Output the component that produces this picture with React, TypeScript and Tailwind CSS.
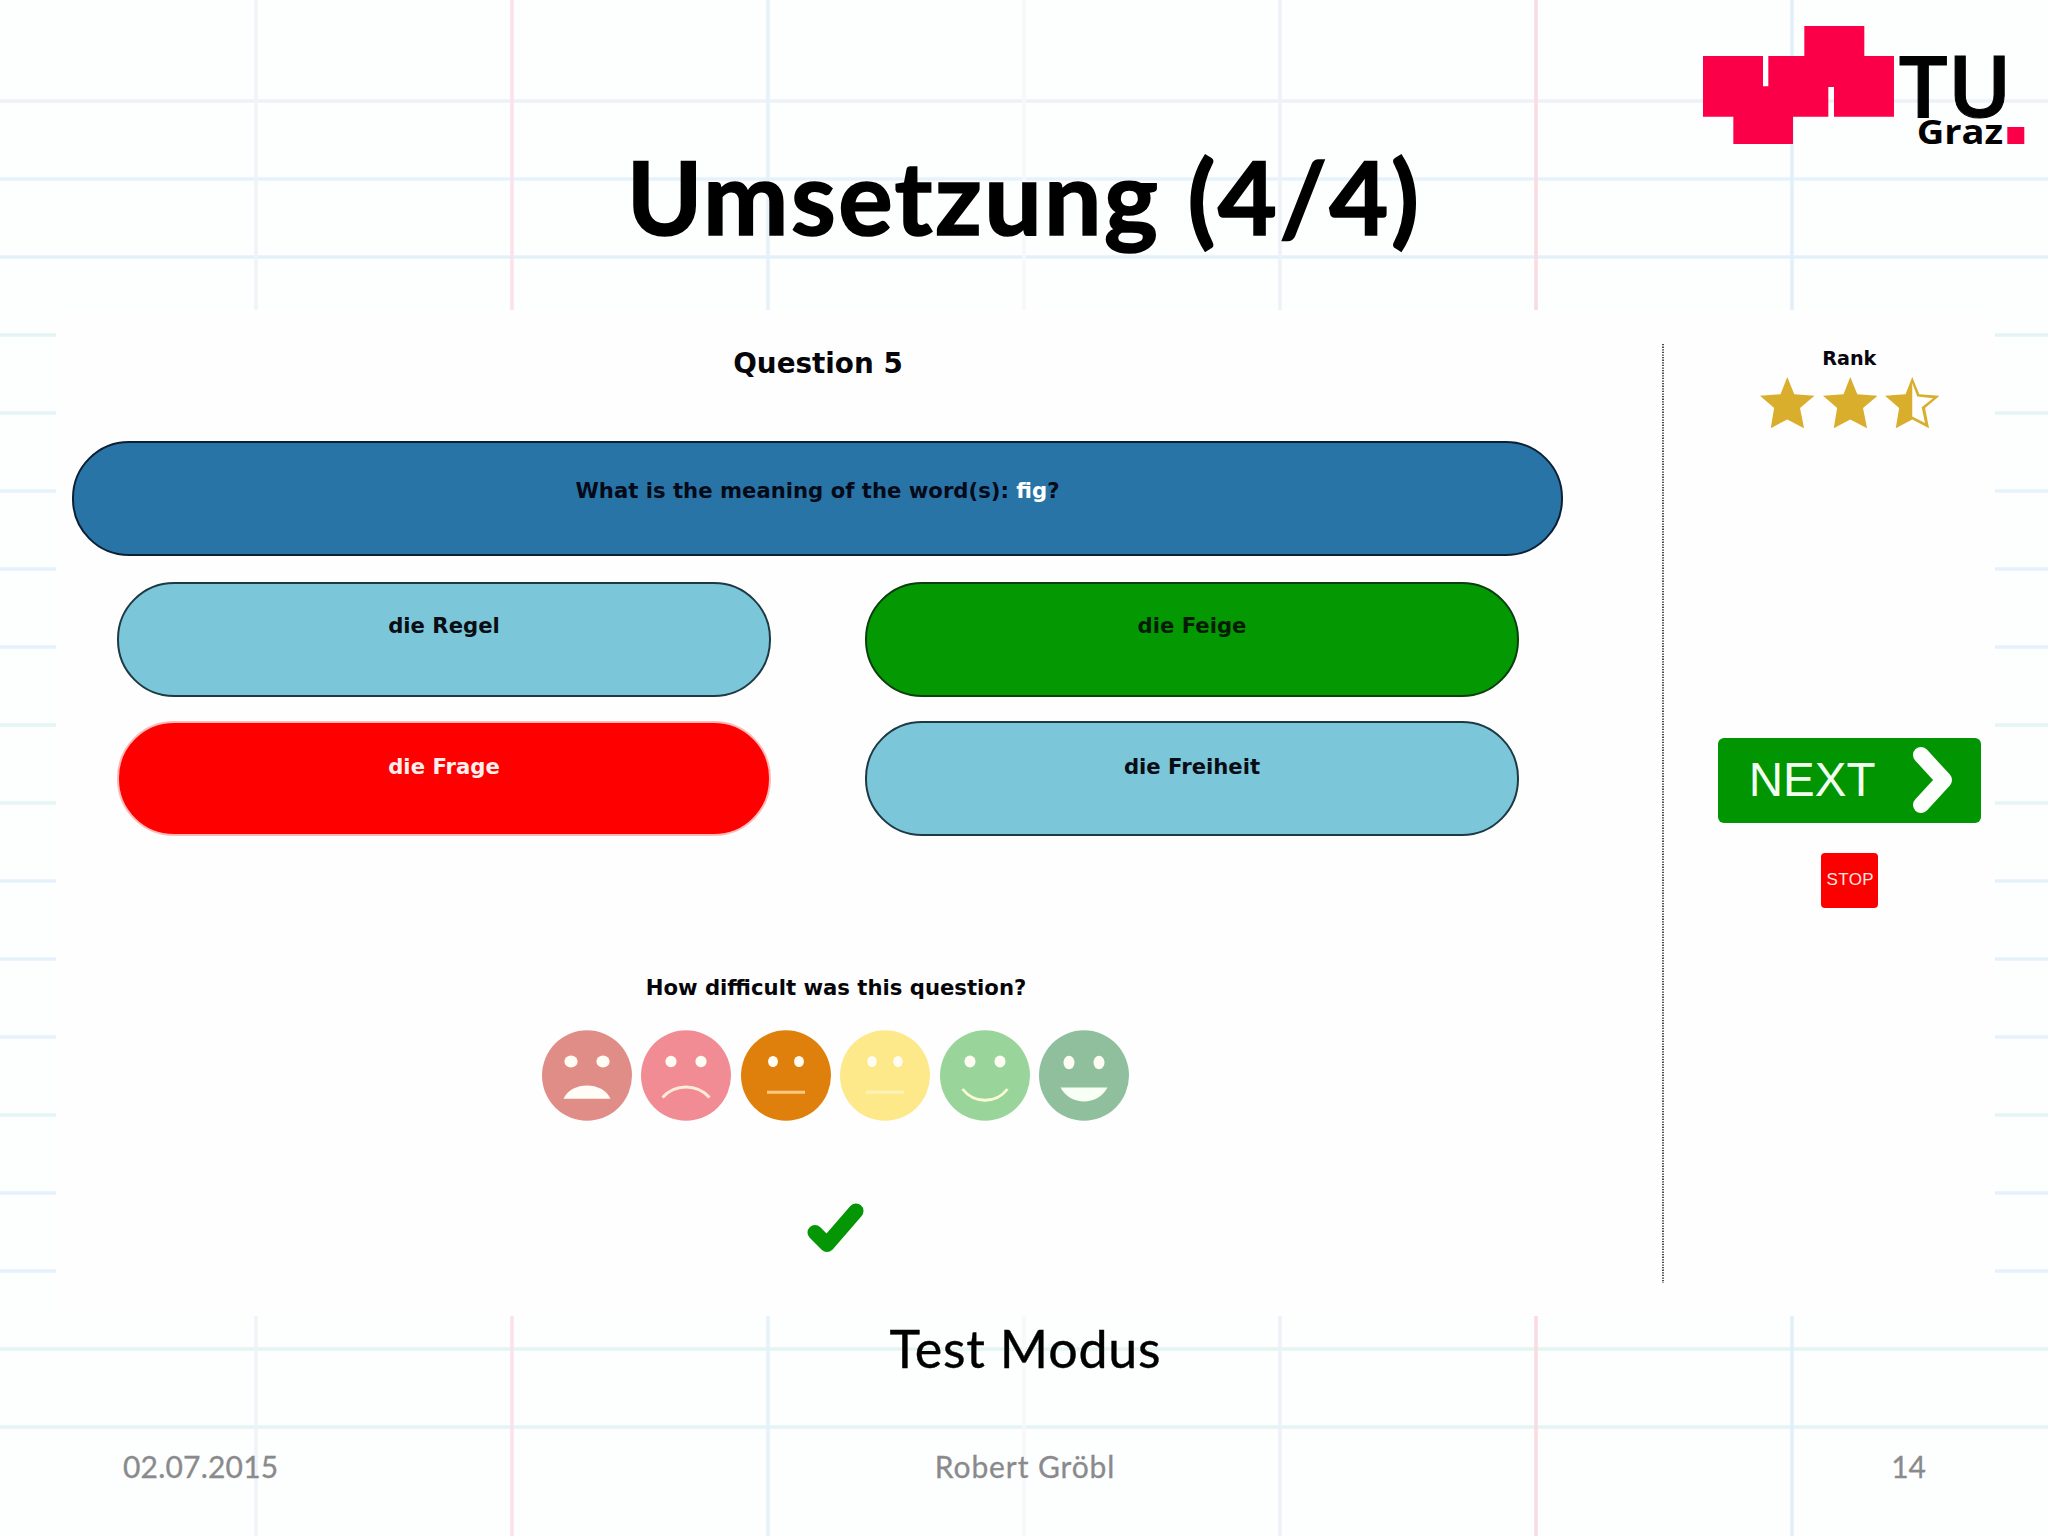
import type { ReactNode } from 'react';

type Status = 'idle' | 'correct' | 'wrong';

interface Answer {
  label: string;
  status: Status;
}

const ANSWER_ROWS: Answer[][] = [
  [
    { label: 'die Regel', status: 'idle' },
    { label: 'die Feige', status: 'correct' },
  ],
  [
    { label: 'die Frage', status: 'wrong' },
    { label: 'die Freiheit', status: 'idle' },
  ],
];

const STATUS_STYLES: Record<Status, string> = {
  idle: 'bg-[#7bc6d8] border-[#1d3a44] text-[#0a0d14]',
  correct: 'bg-[#049802] border-[#0b3f10] text-[#041c04]',
  wrong: 'bg-[#ff0000] border-[#ffb9b9] text-[#fff0ee]',
};

const H_LINES = [
  { y: 101, color: '#edf1f8' },
  { y: 179, color: '#e6f3fb' },
  { y: 257, color: '#e4f1fa' },
  { y: 335, color: '#e4f3f4' },
  { y: 413, color: '#e6f4f8' },
  { y: 491, color: '#e6f4fa' },
  { y: 569, color: '#e6f2fb' },
  { y: 647, color: '#e6f2fb' },
  { y: 725, color: '#e5f5f5' },
  { y: 803, color: '#e5f6f5' },
  { y: 881, color: '#e6f0fb' },
  { y: 959, color: '#e6f0fb' },
  { y: 1037, color: '#e6f1fb' },
  { y: 1115, color: '#e5f4f6' },
  { y: 1193, color: '#e6f1fb' },
  { y: 1271, color: '#e6f1fb' },
  { y: 1349, color: '#e4f4f3' },
  { y: 1427, color: '#e4f4f3' },
];

const V_LINES = [
  { x: 256, color: '#f0f3f8' },
  { x: 512, color: '#fbe2ea' },
  { x: 768, color: '#e6f1fb' },
  { x: 1024, color: '#f8f8fb' },
  { x: 1280, color: '#eef1f8' },
  { x: 1536, color: '#fbdbe2' },
  { x: 1792, color: '#e2effa' },
];

function PaperLines() {
  return (
    <svg className="absolute inset-0 -z-10" width="2048" height="1536" viewBox="0 0 2048 1536">
      {H_LINES.map(({ y, color }) => (
        <line key={y} x1="0" x2="2048" y1={y} y2={y} stroke={color} strokeWidth="3.6" />
      ))}
      {V_LINES.map(({ x, color }) => (
        <line key={x} x1={x} x2={x} y1="0" y2="1536" stroke={color} strokeWidth="3.6" />
      ))}
    </svg>
  );
}

function Logo() {
  return (
    <svg className="mt-[26px] mr-6 self-end overflow-visible" width="321.3" height="118" viewBox="68 78 964 354">
      <path
        d="M68 168H248V259H264V168H372V78H552V168H641V350H461V261H444V350H338V432H159V350H68Z"
        fill="#fb0049"
      />
      <g fontFamily="Open Sans, sans-serif" fill="#020202">
        <text
          transform="translate(655 350) scale(1.02 1)"
          fontSize="255"
          fontWeight="600"
          stroke="#020202"
          strokeWidth="3"
        >
          TU
        </text>
        <text transform="translate(709 433) scale(1.1 1)" fontSize="104" fontWeight="700">Graz</text>
      </g>
      <rect x="981" y="381" width="51" height="51" fill="#fb0049" />
    </svg>
  );
}

const STAR = 'M81 0L102 51L162 56L119 92L131 152L81 126L32 152L42 92L0 56L61 51Z';

function Star({ half = false }: { half?: boolean }) {
  return (
    <svg width="54.5" height="51.5" viewBox="0 0 162 153">
      {half ? (
        <path
          fillRule="evenodd"
          d={`${STAR}M81 18V117L119 137L109 90L143 63L96 58Z`}
          fill="#d9ae2d"
        />
      ) : (
        <path d={STAR} fill="#d9ae2d" />
      )}
    </svg>
  );
}

interface FaceProps {
  color: string;
  eyeX: number;
  eyeY?: number;
  rx: number;
  ry: number;
  children: ReactNode;
}

function Face({ color, eyeX, eyeY = -14, rx, ry, children }: FaceProps) {
  return (
    <svg width="90" height="91" viewBox="-45 -45.5 90 91">
      <ellipse rx="45" ry="45.3" fill={color} />
      <ellipse cx={-eyeX} cy={eyeY} rx={rx} ry={ry} fill="#fffdf3" />
      <ellipse cx={eyeX} cy={eyeY} rx={rx} ry={ry} fill="#fffdf3" />
      {children}
    </svg>
  );
}

function DifficultyPicker() {
  return (
    <div className="mt-[31.5px] mr-px flex gap-[9.6px]">
      <Face color="#e08d88" eyeX={16} rx={6.6} ry={6}>
        <path d="M-23.5 23.3C-16 5.5 16 5.5 23.5 23.3Z" fill="#fffdf5" />
      </Face>
      <Face color="#f18c94" eyeX={15} rx={5.6} ry={5.8}>
        <path d="M-23.5 22C-11 8 11 8 23.5 22" fill="none" stroke="#ffeadb" strokeWidth="2.8" />
      </Face>
      <Face color="#df800d" eyeX={13} rx={4.9} ry={5.5}>
        <path d="M-19 16.7H19" stroke="#fbc982" strokeWidth="3" />
      </Face>
      <Face color="#fde88a" eyeX={13} rx={4.7} ry={5.5}>
        <path d="M-19 16.7H19" stroke="#fff2b8" strokeWidth="3" />
      </Face>
      <Face color="#99d49b" eyeX={15} rx={5.5} ry={6}>
        <path d="M-22.5 13.5C-11 28.5 11 28.5 22.5 13.5" fill="none" stroke="#fbfbd4" strokeWidth="2.8" />
      </Face>
      <Face color="#8fbf9c" eyeX={15} eyeY={-13} rx={5.5} ry={6.8}>
        <path d="M-23.5 12H23.5C14 30.5 -14 30.5 -23.5 12Z" fill="#f8fff5" />
      </Face>
    </div>
  );
}

function Quiz() {
  return (
    <section className="flex w-[1523px] flex-col items-center text-[21.2px] leading-none font-bold text-[#06060a]">
      <h2 className="mt-10 h-7 pl-px text-[27.8px]">Question 5</h2>

      <div className="mt-[63px] h-[115px] w-[1491px] rounded-[57px] border-2 border-[#0c2035] bg-[#2874a7] pt-[37px] text-center text-[#050a18]">
        What is the meaning of the word(s): <span className="text-white">fig</span>?
      </div>

      {/* Answers */}
      <div className="mt-[26px] ml-px flex flex-col gap-6">
        {ANSWER_ROWS.map((row, i) => (
          <div key={i} className="flex gap-[94px]">
            {row.map(({ label, status }) => (
              <button
                key={label}
                className={`flex h-[115px] w-[654px] justify-center rounded-[57px] border-2 ${
                  i === 0 ? 'pt-[31px]' : 'pt-[33px]'
                } ${STATUS_STYLES[status]}`}
              >
                {label}
              </button>
            ))}
          </div>
        ))}
      </div>

      {/* Feedback */}
      <div className="mt-[141px] ml-[37px] flex flex-col items-center">
        <p>How difficult was this question?</p>
        <DifficultyPicker />
        <svg className="mt-[82.5px] mr-[2px]" width="57" height="50" viewBox="0 0 57 50">
          <path
            d="M8 29.5L20 41.5L49 8"
            fill="none"
            stroke="#049604"
            strokeWidth="15"
            strokeLinecap="round"
            strokeLinejoin="round"
          />
        </svg>
      </div>
    </section>
  );
}

function Sidebar() {
  return (
    <aside className="flex flex-1 flex-col items-center pt-[39px] pl-10">
      <h3 className="text-[19.2px] leading-none font-bold text-[#0a0610]">Rank</h3>
      <div className="mt-[9px] ml-px flex gap-[7.8px]">
        <Star />
        <Star />
        <Star half />
      </div>

      <button className="mt-[309px] flex h-[85px] w-[263px] items-center rounded-md bg-[#029502] pl-[31px] font-['Liberation_Sans',sans-serif] text-[47.5px] leading-none text-[#f2fff0]">
        <span className="pb-px">NEXT</span>
        <svg className="ml-[38px]" width="39" height="66" viewBox="0 0 39 66">
          <path
            d="M8 8L31 33L8 58"
            fill="none"
            stroke="#fdfffc"
            strokeWidth="16"
            strokeLinecap="round"
            strokeLinejoin="round"
          />
        </svg>
      </button>
      <button className="mt-[30px] flex h-[55px] w-[57px] items-center justify-center rounded bg-[#fc0000] pb-px pl-[2px] font-['Liberation_Sans',sans-serif] text-[17px] leading-none tracking-[0.4px] text-[#ffe4e0]">
        STOP
      </button>
    </aside>
  );
}

export default function App() {
  return (
    <main className="relative isolate flex h-[1536px] w-[2048px] flex-col overflow-hidden bg-[#fdfefe] font-['Lato',sans-serif] text-black">
      <PaperLines />

      <header className="flex h-[310px] flex-col">
        <Logo />
        <h1 className="mt-px text-center text-[102px] leading-none font-bold tracking-[2.4px] [-webkit-text-stroke:1.6px_black]">
          Umsetzung (4/4)
        </h1>
      </header>

      <div className="ml-14 flex h-[1006px] w-[1939px] bg-[#fefefe] font-['DejaVu_Sans',sans-serif]">
        <Quiz />
        {/* Dotted divider */}
        <svg className="mt-[34px] ml-[82.5px]" width="2" height="939" viewBox="0 0 2 939">
          <line x1="1" x2="1" y1="0" y2="939" stroke="#2c2c32" strokeWidth="1.7" strokeDasharray="1.3 1.3" />
        </svg>
        <Sidebar />
      </div>

      <p className="mt-[6px] pl-[3px] text-center text-[52px] leading-none tracking-[0.8px] [-webkit-text-stroke:0.4px_black]">
        Test Modus
      </p>

      <footer className="mt-[77px] grid grid-cols-3 pr-[122px] pl-[123px] text-[30px] leading-none text-[#8a8a8c] [-webkit-text-stroke:0.3px_#8a8a8c]">
        <span className="tracking-[0.2px]">02.07.2015</span>
        <span className="pl-px text-center tracking-[0.9px]">Robert Gröbl</span>
        <span className="text-right">14</span>
      </footer>
    </main>
  );
}
